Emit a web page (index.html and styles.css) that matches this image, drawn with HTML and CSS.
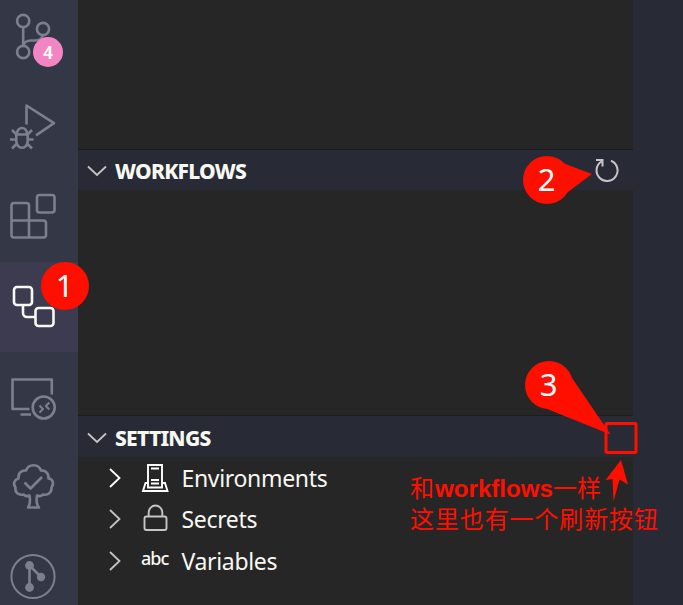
FILE: index.html
```
<!DOCTYPE html>
<html lang="en">
<head>
<meta charset="utf-8">
<title>Workflows</title>
<link rel="stylesheet" href="styles.css">
</head>
<body>
<div class="window">
  <nav class="activity-bar">
    <div class="activity">
      <svg viewBox="0 -8 78 90"><circle cx="23.2" cy="21" r="6.1"/><circle cx="43" cy="29" r="6.1"/><circle cx="23.2" cy="52" r="6.1"/><path d="M23.2 27v19M43 35c-1 4-4 5.500-8 5.500h-4c-4 0-7 2-7.800 5.500"/></svg>
      <span class="badge">4</span>
    </div>
    <div class="activity">
      <svg viewBox="0 82 78 90"><path d="M26.500 124.500v-19L54 123.200 36 135.300"/><path d="M16.300 134.500h11.400v6.500a5.700 6.800 0 0 1-11.400 0zM17 134c.2-8 9.800-8 10 0M16 134l-4-4M28 134l4-4M16 139.500h-6M28 139.500h5.500M16.500 144l-4.500 4.500M27.500 144l4.500 4.500"/></svg>
    </div>
    <div class="activity">
      <svg viewBox="0 172 78 90"><rect x="37" y="195" width="17.500" height="17.500" rx="2.500"/><path d="M11.500 220.500V205.500a2.500 2.500 0 0 1 2.500-2.500H26.500a2.500 2.500 0 0 1 2.500 2.500V220.500H43.500a2.500 2.500 0 0 1 2.500 2.500V235a2.500 2.500 0 0 1-2.500 2.500H14a2.500 2.500 0 0 1-2.500-2.500zM11.500 220.500H29V237.500"/></svg>
    </div>
    <div class="activity active">
      <svg viewBox="0 262 78 90"><rect x="14" y="287" width="18" height="18" rx="3"/><rect x="35.500" y="308" width="18" height="18" rx="3"/><path d="M23 305v8a4 4 0 0 0 4 4h8.500"/></svg>
    </div>
    <div class="activity">
      <svg viewBox="0 352 78 90"><path d="M51.800 394.500V379.500H12.500V409H29.500M20.500 414.500H31"/><circle cx="43.700" cy="407.500" r="11"/><path class="thin" d="M39.500 405.500l3.500 3.500-3.500 3.500M49.300 402.500l-3.500 3.500 3.500 3.500"/></svg>
    </div>
    <div class="activity">
      <svg viewBox="0 442 78 90"><path d="M28 507.500h11c-2.500-3-3-7-2-12 2 1 4 1 6-1 5 1 9-2 8.500-7 3-4 1-9-3-9 .5-5-3-8.500-7.500-8-2.500-7-12.500-7-15 0-5-.5-8 3-7.500 8-4 1-6 5-3 9-1 5 3 8 8 7 2 2 4 2 6 1 1 5 .5 9-1.500 12z"/><path d="M24.500 482.500l6 6 11.500-11.500"/></svg>
    </div>
    <div class="activity">
      <svg viewBox="0 532 78 90"><circle class="thin" cx="33" cy="576.500" r="21.600"/><path d="M29.500 565.500V587.500M29.500 565.500L41 577"/><g class="solid"><circle cx="29.500" cy="565.500" r="4.400"/><circle cx="41" cy="577" r="4.200"/><circle cx="29.500" cy="587.500" r="4.400"/></g></svg>
    </div>
  </nav>
  <main class="panel">
    <section class="upper"></section>
    <section class="workflows">
      <header class="section-header short">
        <svg class="chevron" viewBox="0 0 20 12"><path d="M1 1.500l9 8.500 9-8.500"/></svg>
        <h2>WORKFLOWS</h2>
        <svg class="refresh" viewBox="594 156 26 28"><path d="M596 160h6.500v6.500M601.500 161.500A10.500 10.500 0 1 0 611 160.700"/></svg>
      </header>
    </section>
    <section class="settings">
      <header class="section-header">
        <svg class="chevron" viewBox="0 0 20 12"><path d="M1 1.500l9 8.500 9-8.500"/></svg>
        <h2>SETTINGS</h2>
      </header>
      <ul class="tree">
        <li class="row lit">
          <svg class="twisty" viewBox="0 0 12 20"><path d="M1 1l9.500 9L1 19"/></svg>
          <svg class="icon" viewBox="141 464 28 30"><path d="M148 486V466h14V486M148 484H145.500L143 492H167.500L165 484H162M148 486v2.500h14V486M151 469.500h8M151 481h8M151 484.500h8"/></svg>
          <span class="label">Environments</span>
        </li>
        <li class="row">
          <svg class="twisty" viewBox="0 0 12 20"><path d="M1 1l9.500 9L1 19"/></svg>
          <svg class="icon" viewBox="141 505 28 30"><rect x="144.500" y="517.500" width="22" height="13.500" rx="2"/><path d="M148.700 517.500V513.500a6.800 7 0 0 1 13.600 0v4"/></svg>
          <span class="label">Secrets</span>
        </li>
        <li class="row">
          <svg class="twisty" viewBox="0 0 12 20"><path d="M1 1l9.500 9L1 19"/></svg>
          <span class="icon abc">abc</span>
          <span class="label">Variables</span>
        </li>
      </ul>
    </section>
  </main>
  <svg class="annotations" viewBox="0 0 683 605">
    <circle cx="65" cy="286" r="24"/>
    <circle cx="547" cy="180" r="24"/>
    <path d="M564 163.500L592 174 568 192z"/>
    <circle cx="549" cy="385" r="24"/>
    <path d="M572 378L610.500 434.500 546 408.500z"/>
    <rect class="target" x="606" y="423.500" width="30" height="29" rx="1"/>
    <path d="M621 460L628 484.500 619.500 479.500 613.500 501.500 612.500 479 605.500 480z"/>
    <g class="number"><text x="64.500" y="297">1</text><text x="546.500" y="191">2</text><text x="548.500" y="396">3</text></g>
    <g class="note">
      <text x="410" y="496.500">和</text>
      <text class="latin" x="435" y="496.500" textLength="118" lengthAdjust="spacingAndGlyphs">workflows</text>
      <text x="553" y="496.500" textLength="48">一样</text>
      <text x="410" y="527.500" textLength="248">这里也有一个刷新按钮</text>
    </g>
  </svg>
</div>
</body>
</html>
```
FILE: styles.css
```
* { box-sizing: border-box; }
body { margin: 0; overflow: hidden; font-family: "Noto Sans", "Open Sans", sans-serif; }
svg { display: block; fill: none; stroke: currentColor; }
.window { position: relative; display: flex; width: 683px; height: 605px; overflow: hidden; background: #282a36; }
.activity-bar { flex: none; width: 78px; margin-top: -8px; background: #343746; color: #7b7f8e; }
.activity { position: relative; height: 90px; }
.activity svg { width: 78px; height: 90px; stroke-width: 2.6; stroke-linejoin: round; }
.activity .thin { stroke-width: 2; }
.activity .solid { fill: currentColor; stroke: none; }
.active { background: #3c3b50; color: #f8f8f2; }
.badge { position: absolute; left: 33px; top: 45px; width: 30px; height: 30px; border-radius: 50%; background: #f286c4; color: #f8f8f2; font-size: 17px; font-weight: 700; line-height: 32px; text-align: center; }
.panel { display: grid; grid-template-rows: 149px 266px 1fr; width: 555px; background: #262626; }
.section-header { display: flex; align-items: center; height: 42px; padding: 2px 13px 0 9px; border-top: 1px solid #1b1c23; background: #282a36; color: #f8f8f2; }
.short { height: 41px; }
.chevron { width: 20px; height: 12px; margin-right: 8px; color: #c5c5c5; stroke-width: 1.8; }
h2 { margin: 0; font-size: 21px; line-height: 28px; font-weight: 800; letter-spacing: -.75px; }
.refresh { width: 26px; height: 28px; margin: -2px 0 0 auto; color: #c5c5c5; stroke-width: 2; }
.tree { margin: 0; padding: 0 0 0 31px; list-style: none; }
.row { display: flex; align-items: center; height: 41.500px; color: #c5c5c5; }
.lit { color: #fff; }
.twisty { width: 12px; height: 20px; margin-right: 20px; stroke-width: 1.8; }
.icon { width: 28px; height: 30px; margin-right: 12.500px; stroke-width: 1.9; }
.abc { color: #f8f8f2; font-size: 18px; font-weight: 500; line-height: 25px; letter-spacing: -1px; }
.label { color: #f8f8f2; font-size: 23px; line-height: 32px; letter-spacing: -.33px; }
.annotations { position: absolute; inset: 0; width: 683px; height: 605px; fill: #ff0f00; stroke: none; }
.target { fill: none; stroke: #ff0f00; stroke-width: 3; }
.number { fill: #fff; font-size: 31px; font-weight: 400; text-anchor: middle; }
.note { font: 24px "Liberation Sans", "Noto Sans CJK SC", sans-serif; }
.latin { font-weight: 700; }
```
